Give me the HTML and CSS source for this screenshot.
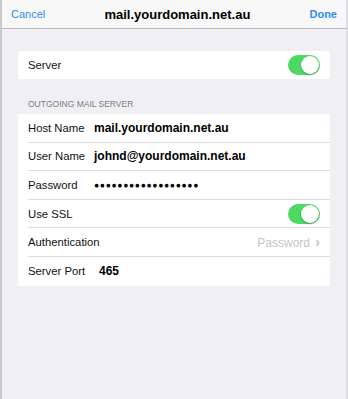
FILE: index.html
```html
<!DOCTYPE html>
<html lang="en">
<head>
  <meta charset="UTF-8" />
  <meta name="viewport" content="width=device-width, initial-scale=1.0"/>
  <title>mail.yourdomain.net.au</title>
  <link rel="stylesheet" href="styles.css">
</head>
<body>
  <div class="sheet">
    <header class="navbar">
      <a class="nav-btn">Cancel</a>
      <h1>mail.yourdomain.net.au</h1>
      <a class="nav-btn done">Done</a>
    </header>

    <div class="group first">
      <div class="row">
        <span class="label">Server</span>
        <span class="toggle"></span>
      </div>
    </div>

    <p class="group-title">OUTGOING MAIL SERVER</p>
    <div class="group">
      <div class="row">
        <span class="label">Host Name</span>
        <span class="value">mail.yourdomain.net.au</span>
      </div>
      <div class="row">
        <span class="label">User Name</span>
        <span class="value">johnd@yourdomain.net.au</span>
      </div>
      <div class="row">
        <span class="label">Password</span>
        <span class="value dots">&#9679;&#9679;&#9679;&#9679;&#9679;&#9679;&#9679;&#9679;&#9679;&#9679;&#9679;&#9679;&#9679;&#9679;&#9679;&#9679;&#9679;&#9679;</span>
      </div>
      <div class="row">
        <span class="label">Use SSL</span>
        <span class="toggle"></span>
      </div>
      <div class="row">
        <span class="label">Authentication</span>
        <span class="detail">Password <span class="chevron">&#8250;</span></span>
      </div>
      <div class="row">
        <span class="label">Server Port</span>
        <span class="value port">465</span>
      </div>
    </div>
  </div>
</body>
</html>
```

FILE: styles.css
```css
* { margin: 0; padding: 0; box-sizing: border-box; font-family: 'Liberation Sans', Arial, sans-serif; }
html, body { height: 100%; }
body { background-color: #efeff4; color: #000; }

.sheet {
  min-height: 100%;
  border-left: 2px solid #c9c9ce;
  border-right: 2px solid #dcdce0;
}

.navbar {
  display: flex;
  justify-content: space-between;
  align-items: center;
  height: 29px;
  padding: 0 9px 0 9px;
  background-color: #f8f8f8;
  border-bottom: 1px solid #b9b9bd;
}

.navbar h1 {
  font-size: 13px;
  font-weight: bold;
}

.nav-btn {
  font-size: 11px;
  color: #2f8cf4;
  cursor: pointer;
}

.nav-btn.done { font-weight: bold; }

.group {
  margin: 0 16px;
  background-color: #fff;
  border-radius: 3px;
}

.group.first { margin-top: 22px; }

.group-title {
  margin: 20px 26px 5px;
  font-size: 8.5px;
  color: #7d7d82;
}

.row {
  display: flex;
  align-items: center;
  height: 28.6px;
  margin-left: 10px;
  padding-right: 10px;
  border-bottom: 1px solid #dcdce0;
}

.row:last-child { border-bottom: none; }
.group.first .row { height: 28px; }

.label {
  font-size: 11.3px;
  color: #111;
  min-width: 66px;
}

.value {
  font-size: 12px;
  font-weight: bold;
  color: #000;
}

.value.dots {
  font-size: 8.5px;
  letter-spacing: 0.7px;
}

.value.port { margin-left: 5px; }

.toggle {
  position: relative;
  margin-left: auto;
  width: 32px;
  height: 20px;
  border-radius: 10px;
  background-color: #4cd964;
}

.toggle::after {
  content: "";
  position: absolute;
  top: 1px;
  right: 1px;
  width: 18px;
  height: 18px;
  border-radius: 50%;
  background-color: #fff;
  box-shadow: 0 1px 2px rgba(0, 0, 0, 0.3);
}

.detail {
  margin-left: auto;
  font-size: 12px;
  color: #c4c4c9;
}

.chevron {
  font-size: 14px;
  font-weight: bold;
  margin-left: 2px;
}
```
